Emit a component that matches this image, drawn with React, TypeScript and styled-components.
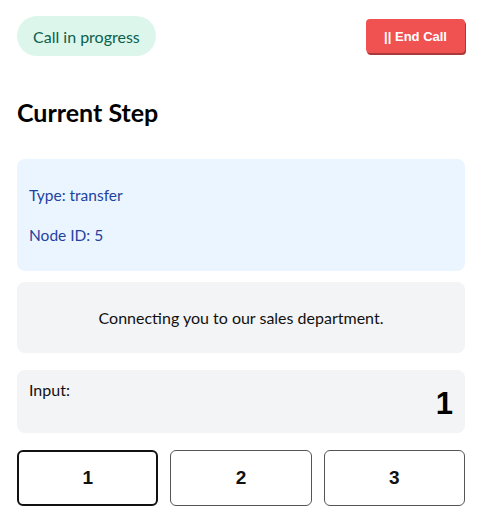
import styled, { createGlobalStyle } from "styled-components";

const GlobalStyle = createGlobalStyle`
  body {
    margin: 0;
    background: #ffffff;
    font-family: Lato, "Noto Sans", sans-serif;
    color: #111827;
  }
`;

const Page = styled.div`
  width: 448px;
  padding: 16px 13px 0 17px;
  display: flex;
  flex-direction: column;
`;

const Header = styled.div`
  display: flex;
  align-items: center;
  justify-content: space-between;
`;

const StatusBadge = styled.div`
  height: 40px;
  padding: 0 16px;
  display: flex;
  align-items: center;
  border-radius: 20px;
  background: #dcf6ec;
  color: #0b5f4c;
  font-size: 16px;
`;

const EndCallButton = styled.button`
  height: 34px;
  padding: 0 18px;
  border: none;
  border-radius: 4px;
  background: #f05252;
  box-shadow: 1px 2px 0 #a93a3a;
  color: #ffffff;
  font-family: "Liberation Sans", Arial, sans-serif;
  font-weight: bold;
  font-size: 13px;
  cursor: pointer;
`;

const Title = styled.h2`
  margin: 40px 0 31px;
  font-size: 25px;
  line-height: 32px;
  font-weight: 700;
  color: #000;
`;

const InfoCard = styled.div`
  padding: 8px 12px;
  border-radius: 8px;
  background: #ebf5ff;
  color: #1e429f;
  font-size: 15.5px;
`;

const InfoLine = styled.p`
  margin: 16px 0;
  line-height: 24px;
`;

const MessageCard = styled.div`
  margin-top: 11px;
  padding: 24px 12px 23px;
  border-radius: 8px;
  background: #f3f4f6;
  text-align: center;
  font-size: 16px;
  line-height: 24px;
  color: #111;
`;

const InputCard = styled.div`
  margin-top: 17px;
  padding: 10px 12px 11px;
  border-radius: 8px;
  background: #f3f4f6;
  display: flex;
  justify-content: space-between;
  align-items: flex-start;
`;

const InputLabel = styled.span`
  font-size: 16px;
  line-height: 20px;
  color: #111;
`;

const InputValue = styled.span`
  margin-top: 6px;
  font-family: "Liberation Sans", Arial, sans-serif;
  font-weight: bold;
  font-size: 31px;
  line-height: 36px;
  color: #000;
`;

const KeyRow = styled.div`
  margin-top: 17px;
  display: grid;
  grid-template-columns: repeat(3, 1fr);
  gap: 12px;
`;

const KeyButton = styled.button<{ $active?: boolean }>`
  height: 56px;
  background: #ffffff;
  border: ${(p) => (p.$active ? "2px solid #111" : "1px solid #555")};
  border-radius: 6px;
  font-family: "Liberation Sans", Arial, sans-serif;
  font-weight: bold;
  font-size: 19px;
  color: #111;
  cursor: pointer;
`;

const keys = ["1", "2", "3"];

export default function App() {
  return (
    <>
      <GlobalStyle />
      <Page>
        <Header>
          <StatusBadge>Call in progress</StatusBadge>
          <EndCallButton>|| End Call</EndCallButton>
        </Header>

        <Title>Current Step</Title>

        <InfoCard>
          <InfoLine>Type: transfer</InfoLine>
          <InfoLine>Node ID: 5</InfoLine>
        </InfoCard>

        <MessageCard>Connecting you to our sales department.</MessageCard>

        <InputCard>
          <InputLabel>Input:</InputLabel>
          <InputValue>1</InputValue>
        </InputCard>

        <KeyRow>
          {keys.map((k, i) => (
            <KeyButton key={k} $active={i === 0}>
              {k}
            </KeyButton>
          ))}
        </KeyRow>
      </Page>
    </>
  );
}
